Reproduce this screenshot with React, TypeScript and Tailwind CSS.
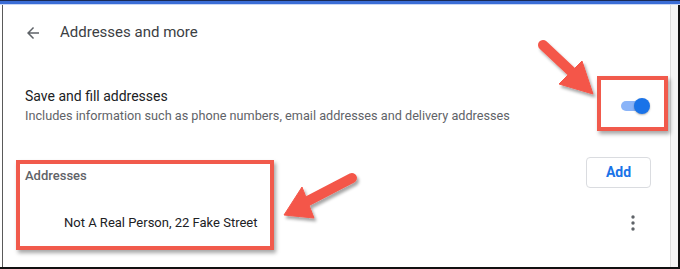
import React from "react";

export default function App() {
  return (
    <div className="relative w-[680px] h-[269px] overflow-hidden bg-white" style={{ fontFamily: "Roboto, 'Liberation Sans', sans-serif" }}>
      <div className="flex flex-col w-full h-full">
        <div className="h-[1px] bg-[#1a2a55]" />
        <div className="h-[3px] bg-[#3b6dd6]" />
        <div className="h-[1px] bg-[#c9d7f4]" />
        <div className="flex flex-1 min-h-0">
          <div className="w-[2px] bg-white" />
          <div className="w-[1px] bg-[#5a5a5a]" />
          <div className="flex-1 flex flex-col">
            <div className="h-[55px] flex items-center pl-[21px]">
              <svg width="18" height="18" viewBox="0 0 24 24" className="text-[#5f6368]">
                <path d="M20 11H7.83l5.59-5.59L12 4l-8 8 8 8 1.41-1.41L7.83 13H20v-2z" fill="currentColor" />
              </svg>
              <span className="ml-[18px] text-[15px] text-[#3c4043]">Addresses and more</span>
            </div>
            <div className="h-[25px]" />
            <div className="flex items-center pl-[22px] pr-[20px] h-[42px]">
              <div className="flex-1 flex flex-col">
                <span className="text-[14px] leading-[20px] text-[#202124]">Save and fill addresses</span>
                <span className="text-[12.7px] leading-[20px] text-[#5f6368]">Includes information such as phone numbers, email addresses and delivery addresses</span>
              </div>
              <div className="relative w-[29px] h-[16px] flex items-center">
                <div className="w-[27px] h-[10px] rounded-full bg-[#8ab4f8]" />
                <div className="absolute right-0 top-0 w-[16px] h-[16px] rounded-full bg-[#1a73e8] shadow-[0_1px_2px_rgba(0,0,0,0.3)]" />
              </div>
            </div>
            <div className="h-[30px]" />
            <div className="flex items-center justify-between pl-[22px] pr-[19px] h-[31px]">
              <span className="text-[13px] font-medium text-[#5f6368] mt-[6px]">Addresses</span>
              <button className="w-[65px] h-[31px] rounded-[4px] border border-[#dadce0] text-[14px] font-bold text-[#1a73e8]">Add</button>
            </div>
            <div className="flex items-center pl-[61px] pr-[35px] h-[46px] mt-[12px]">
              <span className="flex-1 text-[13px] text-[#202124]">Not A Real Person, 22 Fake Street</span>
              <svg width="4" height="16" viewBox="0 0 4 16">
                <circle cx="2" cy="2" r="1.7" fill="#5f6368" />
                <circle cx="2" cy="8" r="1.7" fill="#5f6368" />
                <circle cx="2" cy="14" r="1.7" fill="#5f6368" />
              </svg>
            </div>
            <div className="flex-1" />
          </div>
          <div className="w-[1px] bg-[#dcdcdc]" />
          <div className="w-[7px] bg-[#f4f4f4]" />
          <div className="w-[2px] bg-[#111]" />
        </div>
        <div className="h-[2px] bg-[#111]" />
      </div>

      <div className="absolute left-[597px] top-[76px] w-[71px] h-[55px] border-[4px] border-[#f15a4c] shadow-[2px_3px_4px_rgba(0,0,0,0.35)]" />
      <div className="absolute left-[16px] top-[160px] w-[258px] h-[90px] border-[4px] border-[#f15a4c] shadow-[2px_3px_4px_rgba(0,0,0,0.35)]" />

      <svg className="absolute left-0 top-0 pointer-events-none" width="680" height="269" viewBox="0 0 680 269">
        <defs>
          <filter id="sh" x="-20%" y="-20%" width="140%" height="140%">
            <feDropShadow dx="2" dy="3" stdDeviation="1.6" floodColor="#000" floodOpacity="0.35" />
          </filter>
        </defs>
        <g filter="url(#sh)" fill="#f4574a" stroke="#f4574a">
          <line x1="543" y1="45" x2="576" y2="76" strokeWidth="10" strokeLinecap="round" />
          <polygon points="582,61 559,84 593,94" strokeWidth="1" strokeLinejoin="round" />
        </g>
        <g filter="url(#sh)" fill="#f4574a" stroke="#f4574a">
          <line x1="352" y1="178" x2="304" y2="203" strokeWidth="10" strokeLinecap="round" />
          <polygon points="302,187 314,218 284,215" strokeWidth="1" strokeLinejoin="round" />
        </g>
      </svg>
    </div>
  );
}
